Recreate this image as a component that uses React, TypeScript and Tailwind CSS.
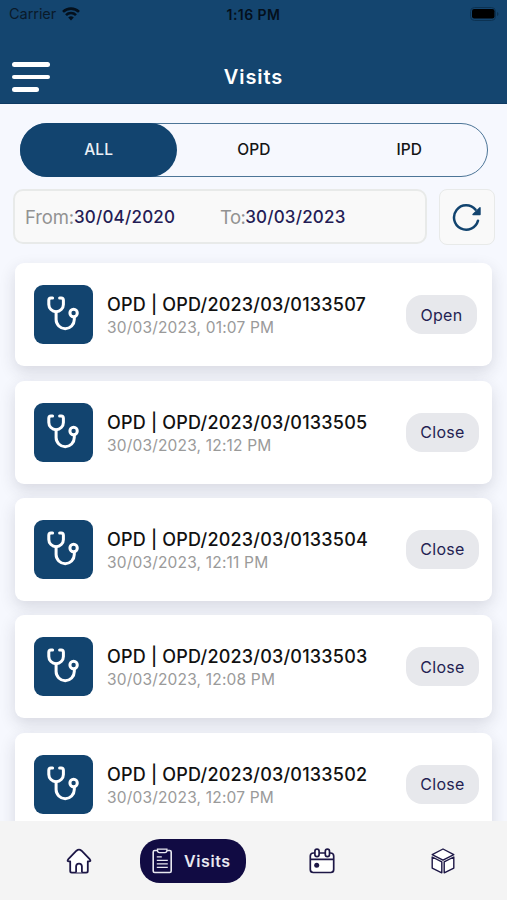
import React from "react";

const visits = [
  { id: "0133507", time: "01:07 PM", status: "Open" },
  { id: "0133505", time: "12:12 PM", status: "Close" },
  { id: "0133504", time: "12:11 PM", status: "Close" },
  { id: "0133503", time: "12:08 PM", status: "Close" },
  { id: "0133502", time: "12:07 PM", status: "Close" },
];

function StatusBar() {
  return (
    <div className="grid h-[28px] grid-cols-3 items-center px-[8px] text-black">
      <div className="flex items-center gap-[6px] pl-px">
        <span className="text-[14.5px] tracking-[-0.05px] text-[#0a1a2a]">Carrier</span>
        <svg width="18" height="14" viewBox="0 0 18 14" fill="none" stroke="#04101c" strokeWidth="2.6">
          <path d="M1 4.9a11.4 11.4 0 0 1 16 0" />
          <path d="M4 8.1a7.1 7.1 0 0 1 10 0" />
          <path d="M6.2 10.5a4 4 0 0 1 5.6 0L9 13.5z" fill="#04101c" stroke="none" />
        </svg>
      </div>
      <span className="text-center text-[14px] font-semibold tracking-[0.45px] text-[#04101c]">1:16 PM</span>
      <svg className="justify-self-end" width="29" height="14" viewBox="0 0 29 14">
        <rect x="0.5" y="0.5" width="25" height="13" rx="4" fill="none" stroke="#0c3252" />
        <rect x="2" y="2" width="22.5" height="9.5" rx="2.2" fill="#000" />
        <path d="M27 5v4q1.5-.5 1.5-2T27 5" fill="#0c3252" />
      </svg>
    </div>
  );
}

function Stethoscope() {
  return (
    <svg width="59" height="59" viewBox="0 0 59 59" fill="none" stroke="#fff" strokeWidth="3" strokeLinecap="round" strokeLinejoin="round">
      <path d="M18.6 13H17q-2.2 0-2.2 2.3v4.1a7.3 7.3 0 0 0 14.6 0v-4.1q0-2.3-2.2-2.3h-1.6" />
      <path d="M22.1 27v7.6a9.1 9.1 0 0 0 18.2 0v-2.4" />
      <circle cx="39.6" cy="28" r="3.7" />
    </svg>
  );
}

export default function App() {
  return (
    <div className="flex h-[900px] w-[507px] flex-col overflow-hidden bg-[#f6f8fe] font-['Inter','Liberation_Sans',sans-serif]">
      <header className="h-[103.5px] shrink-0 border-b border-[#0d3a62] bg-[#14456f]">
        <StatusBar />
        <div className="grid h-[98px] grid-cols-[1fr_auto_1fr] items-center px-3">
          <div className="flex flex-col gap-[8px]">
            <span className="h-[4.5px] w-[38px] rounded-full bg-white" />
            <span className="h-[4.5px] w-[38px] rounded-full bg-white" />
            <span className="h-[4.5px] w-[27px] rounded-full bg-white" />
          </div>
          <h1 className="text-[20px] font-semibold tracking-[0.9px] text-white">Visits</h1>
        </div>
      </header>

      <main className="min-h-0 flex-1 overflow-hidden">
        <div className="ml-[20px] mt-[19px] grid h-[54.5px] w-[468px] grid-cols-3 rounded-full border-[1.5px] border-[#4c7597] text-center text-[15.5px] font-medium leading-[52px] tracking-[0.1px] text-[#151515]">
          <button className="-m-px rounded-full bg-[#12446f] text-[#eaf0f6]">ALL</button>
          <button>OPD</button>
          <button>IPD</button>
        </div>

        <div className="ml-[13px] mt-[12px] flex gap-[12px]">
          <div className="flex h-[55px] w-[414px] items-center rounded-[10px] border-2 border-[#e8eae9] bg-[#f9f9f9] pl-[10px] pt-[2px] text-[18.5px] text-[#929292]">
            <div className="flex w-[195px] items-center">
              <span className="tracking-[-0.15px]">From:</span>
              <span className="text-[17px] font-medium tracking-[0.2px] text-[#241c55]">30/04/2020</span>
            </div>
            <span className="tracking-[-0.6px]">To:</span>
            <span className="text-[17px] font-medium tracking-[0.2px] text-[#241c55]">30/03/2023</span>
          </div>
          <button className="flex h-[56px] w-[56px] items-center justify-center rounded-[8px] border-[1.5px] border-[#e8eae9] bg-[#f9f9f9]">
            <svg width="30" height="30" viewBox="0 0 30 30" fill="none" stroke="#12446f" strokeWidth="2.5" strokeLinecap="round">
              <path d="M26 18.7A12.2 12.2 0 1 1 23.5 7.6" />
              <path d="M28 5.8V12.6H21z" fill="#12446f" strokeWidth="1.4" strokeLinejoin="round" />
            </svg>
          </button>
        </div>

        <div className="ml-[15px] mt-[18.4px] flex w-[477px] flex-col gap-[14.3px]">
          {visits.map((v) => (
            <article key={v.id} className="flex h-[103px] shrink-0 items-center rounded-[9px] bg-white pl-[19px] pr-[13px] shadow-[0_6px_16px_rgba(40,40,60,0.15)]">
              <div className="h-[59px] w-[59px] rounded-[9px] bg-[#12446f]">
                <Stethoscope />
              </div>
              <div className="ml-[14px] flex-1 whitespace-nowrap pt-[2px]">
                <h2 className="text-[18px] font-medium leading-[24px] tracking-[0.2px] text-[#111]">OPD | OPD/2023/03/{v.id}</h2>
                <p className="text-[15.5px] leading-[21px] tracking-[0.18px] text-[#9a9a9a]">30/03/2023, {v.time}</p>
              </div>
              <span className={"flex h-[39px] items-center justify-center rounded-[16px] bg-[#e7e8ec] text-[16px] tracking-[0.3px] text-[#241f52] " + (v.status === "Open" ? "mr-[2px] w-[71px]" : "w-[73px]")}>{v.status}</span>
            </article>
          ))}
        </div>
      </main>

      <nav className="relative flex h-[79px] shrink-0 items-center bg-[#f4f4f4] text-[#1d1746]">
        <svg className="ml-[66px]" width="26" height="26" viewBox="0 0 26 26" fill="#fff" stroke="currentColor" strokeWidth="1.8" strokeLinejoin="round">
          <path d="M4.2 13.4H3.1q-2.5 0-.8-2.2L10.5 2.7q2.5-2.2 5 0l8.2 8.5q1.7 2.2-.8 2.2h-1.1v9.6q0 1.6-1.6 1.6H5.8q-1.6 0-1.6-1.6z" />
          <path d="M10.1 24.6v-6a2.9 2.9 0 0 1 5.8 0v6" />
        </svg>
        <div className="ml-[48px] flex h-[44px] w-[106px] items-center rounded-[20px] bg-[#110b43] pl-[12px] text-[#e8e8f0]">
          <svg width="21" height="26" viewBox="0 0 21 26" fill="none" stroke="currentColor" strokeWidth="1.6">
            <rect x="1.2" y="2.5" width="18" height="22" rx="1.5" />
            <path d="M5.5 1.2h9.4v1.4q0 2-2 2H7.5q-2 0-2-2z" fill="#110b43" strokeWidth="1.3" />
            <path d="M4.8 8.8h5M4.8 12.3h11M4.8 15.8h11M4.8 19.3h11" strokeWidth="1.3" />
          </svg>
          <span className="ml-[11px] text-[16px] font-semibold tracking-[0.6px]">Visits</span>
        </div>
        <svg className="ml-[63px]" width="26" height="26" viewBox="0 0 26 26" fill="#fff" stroke="currentColor" strokeWidth="1.7">
          <path d="M4.5 5Q1.3 5 1.3 8v13.5q0 3 3 3h17.4q3 0 3-3V8q0-3-3.2-3zM1.3 11.4h23.4" />
          <rect x="5.9" y="1.2" width="4.2" height="7.4" rx="2.1" />
          <rect x="16.3" y="1.2" width="4.2" height="7.4" rx="2.1" />
          <circle cx="7.7" cy="17.3" r="2.5" fill="currentColor" stroke="none" />
        </svg>
        <svg className="ml-[96px]" width="24" height="26" viewBox="0 0 24 26" fill="#fff" stroke="currentColor" strokeWidth="1.4" strokeLinejoin="round">
          <path d="M12 1 22.8 6.6 12 12.1 1.2 6.6z" />
          <path d="M1.2 9l9.6 4.9v10.9l-9.6-4.7zM22.8 9l-9.6 4.9v10.9l9.6-4.7z" />
        </svg>
      </nav>
    </div>
  );
}
